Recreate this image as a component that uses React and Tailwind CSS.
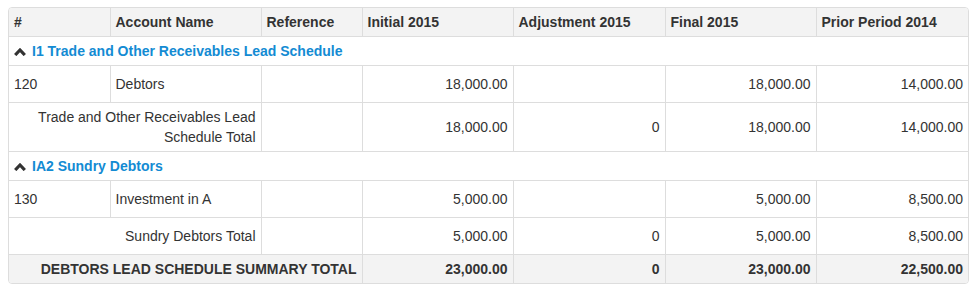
const groups = [
  {
    title: 'I1 Trade and Other Receivables Lead Schedule',
    rows: [{ no: '120', name: 'Debtors', initial: '18,000.00', adj: '', final: '18,000.00', prior: '14,000.00' }],
    total: { label: 'Trade and Other Receivables Lead Schedule Total', initial: '18,000.00', adj: '0', final: '18,000.00', prior: '14,000.00' },
  },
  {
    title: 'IA2 Sundry Debtors',
    rows: [{ no: '130', name: 'Investment in A', initial: '5,000.00', adj: '', final: '5,000.00', prior: '8,500.00' }],
    total: { label: 'Sundry Debtors Total', initial: '5,000.00', adj: '0', final: '5,000.00', prior: '8,500.00' },
  },
]

const cols = ['#', 'Account Name', 'Reference', 'Initial 2015', 'Adjustment 2015', 'Final 2015', 'Prior Period 2014']
const widths = ['w-[101px]', 'w-[151px]', 'w-[101px]', 'w-[151px]', 'w-[152px]', 'w-[151px]', 'w-[152px]']

function ChevronUp() {
  return (
    <svg width="12" height="9" viewBox="0 0 12 9" className="inline-block mr-[6px] align-[0px]">
      <path d="M1.2 8 L6 3 L10.8 8" fill="none" stroke="#333" strokeWidth="3.2" />
    </svg>
  )
}

export default function App() {
  const td = 'border border-[#ddd] px-[5px] align-middle'
  return (
    <div className="bg-white min-h-[292px] pt-[7px] pl-[8px]" style={{ fontFamily: '"Liberation Sans", Arial, sans-serif' }}>
      <div className="w-[961px] border border-[#ddd] rounded overflow-hidden">
        <table className="w-full table-fixed border-collapse border-hidden text-[14px] leading-[20px] text-[#333]">
          <colgroup>
            {widths.map((w, i) => <col key={i} className={w} />)}
          </colgroup>
          <thead>
            <tr className="h-[28px] bg-[#f3f3f3]">
              {cols.map((c) => (
                <th key={c} className={`${td} text-left font-bold`}>{c}</th>
              ))}
            </tr>
          </thead>
          <tbody>
            {groups.map((g) => (
              <>
                <tr key={g.title} className="h-[29px]">
                  <td colSpan={7} className={`${td} font-bold text-[#138bd3]`}>
                    <ChevronUp />
                    {g.title}
                  </td>
                </tr>
                {g.rows.map((r) => (
                  <tr key={r.no} className="h-[37px]">
                    <td className={td}>{r.no}</td>
                    <td className={td}>{r.name}</td>
                    <td className={td}></td>
                    <td className={`${td} text-right`}>{r.initial}</td>
                    <td className={`${td} text-right`}>{r.adj}</td>
                    <td className={`${td} text-right`}>{r.final}</td>
                    <td className={`${td} text-right`}>{r.prior}</td>
                  </tr>
                ))}
                <tr className="h-[37px]">
                  <td colSpan={2} className={`${td} text-right py-[4px] pl-[20px]`}>{g.total.label}</td>
                  <td className={td}></td>
                  <td className={`${td} text-right`}>{g.total.initial}</td>
                  <td className={`${td} text-right`}>{g.total.adj}</td>
                  <td className={`${td} text-right`}>{g.total.final}</td>
                  <td className={`${td} text-right`}>{g.total.prior}</td>
                </tr>
              </>
            ))}
            <tr className="h-[29px] bg-[#f3f3f3] font-bold">
              <td colSpan={3} className={`${td} text-right uppercase`}>Debtors Lead Schedule Summary Total</td>
              <td className={`${td} text-right`}>23,000.00</td>
              <td className={`${td} text-right`}>0</td>
              <td className={`${td} text-right`}>23,000.00</td>
              <td className={`${td} text-right`}>22,500.00</td>
            </tr>
          </tbody>
        </table>
      </div>
    </div>
  )
}
